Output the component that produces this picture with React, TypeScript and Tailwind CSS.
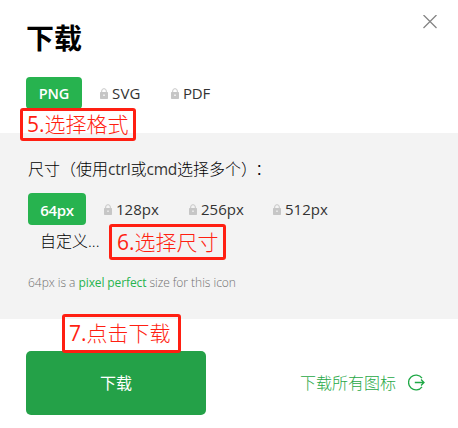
import React from "react";

function Lock() {
  return (
    <svg width="8" height="11" viewBox="0 0 8 11" className="mr-1 shrink-0 text-[#c6c6c6]" fill="none">
      <path d="M1.7 4.5V3a2.3 2.3 0 0 1 4.6 0v1.5" stroke="currentColor" strokeWidth="1" />
      <path fillRule="evenodd" d="M.7 4h6.6q.7 0 .7.7v5.6q0 .7-.7.7H.7q-.7 0-.7-.7V4.700q0-.7.7-.7ZM3.300 6.500v1.500h1.400V6.500Z" fill="currentColor" />
    </svg>
  );
}

function Option({ label, className }: { label: string; className: string }) {
  return (
    <div className={`flex h-full items-center text-[#333] ${className}`}>
      <Lock />
      <span>{label}</span>
    </div>
  );
}

function Note({ step, text, className }: { step: string; text: string; className: string }) {
  return (
    <div
      className={`absolute flex items-center whitespace-nowrap rounded-[3px] border-3 border-[#ff1f12] text-[21px] leading-none font-light text-[#ff1f12] ${className}`}
    >
      <span className="font-normal">{step}</span>
      <span>{text}</span>
    </div>
  );
}

export default function App() {
  return (
    <main className="relative h-[428px] w-[458px] overflow-hidden bg-white font-['Open_Sans','Noto_Sans_CJK_SC',sans-serif] text-[15px] leading-5 text-[#222]">
      <header className="flex h-[77px] items-start justify-between pt-[15px] pr-[21px] pl-[26px]">
        <h1 className="pt-[3px] text-[28px] leading-10 font-bold text-black">下载</h1>
        <svg width="14" height="14" viewBox="0 0 14 14" fill="none" stroke="#858585" strokeWidth="1.3">
          <path d="M.5 0 13.500 13M13.500 0 .5 13" />
        </svg>
      </header>
      <section className="flex h-[56px] items-start pl-[26px]">
        <div className="flex h-8 w-full items-center">
          <div className="flex h-full w-14 shrink-0 items-center justify-center rounded bg-[#27b34f] pt-px text-[14.5px] font-semibold tracking-[-0.1px] text-white">PNG</div>
          <Option label="SVG" className="ml-[18px] w-[71px] text-[15px] tracking-[0.2px]" />
          <Option label="PDF" className="text-[15px] tracking-[-0.2px]" />
        </div>
      </section>
      <section className="flex h-[186px] flex-col bg-[#f3f3f3] pl-7">
        <p className="mt-[26px] text-[16px] leading-5 font-light whitespace-nowrap text-black">
          尺寸（使用<span className="text-[15.5px] font-normal tracking-[-0.2px] text-[#333]">ctrl</span>或<span className="text-[15.5px] font-normal tracking-[-0.2px] text-[#333]">cmd</span>选择多个）<span className="ml-1.5">：</span>
        </p>
        <div className="mt-[14px] flex h-8 items-center">
          <div className="flex h-full w-[58px] items-center justify-center rounded bg-[#27b34f] pt-px text-[15px] font-semibold tracking-[-0.3px] text-white">64px</div>
          <Option label="128px" className="ml-[18px] w-[85px]" />
          <Option label="256px" className="w-[84px]" />
          <Option label="512px" className="" />
        </div>
        <p className="mt-[6px] pl-3 text-[16px] leading-5 font-light text-black">自定义...</p>
        <p className="mt-[22px] text-[12px] leading-5 font-light tracking-[-0.03px] text-[#707070]">
          64px is a <span className="font-normal tracking-[-0.12px] text-[#27b34f]">pixel perfect</span> size for this icon
        </p>
      </section>
      <footer className="flex items-center pt-8 pl-[26px]">
        <button className="flex h-16 w-[180px] items-center justify-center rounded-[5px] bg-[#24a148] text-[16px] text-white">下载</button>
        <a className="ml-[94px] flex items-center text-[16px] font-light text-[#1fa846]">
          <span>下载所有图标</span>
          <svg className="ml-3 -mt-px" width="17" height="17" viewBox="0 0 17 17" fill="none" stroke="currentColor" strokeWidth="1.3">
            <path d="M14 4.200A7.400 7.400 0 1 0 14 12.800M6.800 8.500H16M13 5.500l3 3-3 3" />
          </svg>
        </a>
      </footer>
      <Note step="5." text="选择格式" className="top-[108px] left-5 h-[33px] w-[116px] pl-[4px]" />
      <Note step="6." text="选择尺寸" className="top-[224px] left-[109px] h-9 w-[117px] pl-[5px]" />
      <Note step="7." text="点击下载" className="top-[314px] left-[62px] h-[39px] w-[119px] pl-1" />
    </main>
  );
}
